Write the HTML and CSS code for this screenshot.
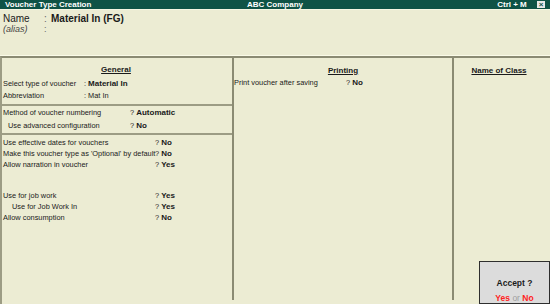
FILE: index.html
```html
<!DOCTYPE html>
<html>

<head>
    <title>Voucher Type Creation</title>
    <link rel="stylesheet" href="styles.css">
</head>

<body>
    <div class="barra">
        <span class="barra-izq">Voucher Type Creation</span>
        <span class="barra-centro">ABC Company</span>
        <span class="barra-der">Ctrl + M <span class="cerrar">&#215;</span></span>
    </div>

    <div class="cabecera">
        <div class="fila-nombre"><span class="etq">Name</span><span class="dos">:</span><b>Material In (FG)</b></div>
        <div class="fila-alias"><span class="etq"><i>(alias)</i></span><span class="dos">:</span></div>
    </div>

    <div class="cuerpo">
        <div class="col col-general">
            <div class="bloque">
                <h5>General</h5>
                <div class="fila"><span class="e1">Select type of voucher</span><span>: <b>Material In</b></span></div>
                <div class="fila"><span class="e1">Abbreviation</span><span>: Mat In</span></div>
            </div>
            <div class="bloque">
                <div class="fila"><span class="e2">Method of voucher numbering</span><span>? <b>Automatic</b></span></div>
                <div class="fila sangria"><span class="e2b">Use advanced configuration</span><span>? <b>No</b></span></div>
            </div>
            <div class="bloque ultimo">
                <div class="fila"><span class="e3">Use effective dates for vouchers</span><span>? <b>No</b></span></div>
                <div class="fila"><span class="e3">Make this voucher type as 'Optional' by default</span><span>? <b>No</b></span></div>
                <div class="fila"><span class="e3">Allow narration in voucher</span><span>? <b>Yes</b></span></div>
                <div class="hueco"></div>
                <div class="fila"><span class="e3">Use for job work</span><span>? <b>Yes</b></span></div>
                <div class="fila sangria2"><span class="e3b">Use for Job Work In</span><span>? <b>Yes</b></span></div>
                <div class="fila"><span class="e3">Allow consumption</span><span>? <b>No</b></span></div>
            </div>
        </div>
        <div class="col col-printing">
            <h5>Printing</h5>
            <div class="fila"><span class="e4">Print voucher after saving</span><span>? <b>No</b></span></div>
        </div>
        <div class="col col-clase">
            <h5>Name of Class</h5>
        </div>
    </div>

    <div class="aceptar">
        <div class="pregunta">Accept ?</div>
        <div class="opciones"><span class="rojo">Yes</span> <span class="gris">or</span> <span class="rojo">No</span></div>
    </div>
</body>

</html>
```

FILE: styles.css
```css
* {
    padding: 0;
    margin: 0;
    box-sizing: border-box;
}

body {
    width: 550px;
    height: 304px;
    background-color: #ececd3;
    font-family: "Liberation Sans", Arial, sans-serif;
    font-size: 7.4px;
    color: #1a1a1a;
    position: relative;
    overflow: hidden;
}

b {
    font-size: 8px;
}

.barra {
    height: 9px;
    background-color: #0f5346;
    color: white;
    font-weight: bold;
    font-size: 8px;
    line-height: 9px;
    display: flex;
    justify-content: space-between;
    padding: 0 5px;
    position: relative;
}

.barra-centro {
    position: absolute;
    left: 247px;
}

.cerrar {
    display: inline-block;
    width: 8px;
    height: 7px;
    margin-left: 8px;
    margin-top: 1px;
    background-color: #e8e8e8;
    color: #0f5346;
    font-size: 8px;
    line-height: 7px;
    text-align: center;
    vertical-align: top;
}

.cabecera {
    height: 47px;
    border-top: 1px solid #f6f6e2;
    padding: 3px 3px 0;
    font-size: 10px;
    border-bottom: 1px solid #fbfbe8;
}

.cabecera b {
    font-size: 10px;
}

.fila-nombre,
.fila-alias {
    display: flex;
    line-height: 11px;
}

.fila-alias {
    font-size: 9px;
    color: #444;
}

.etq {
    width: 41px;
}

.dos {
    width: 7px;
    color: #666;
}

.cuerpo {
    display: grid;
    grid-template-columns: 232px 220px 98px;
    height: 248px;
    border-top: 2px solid #8b8b73;
    border-left: 2px solid #9c9c84;
}

.col {
    border-right: 2px solid #8b8b73;
    height: 242px;
}

.col-clase {
    border-right: none;
}

h5 {
    font-size: 8px;
    text-align: center;
    text-decoration: underline;
    line-height: 11px;
    padding-top: 6px;
    padding-bottom: 3px;
}

.col-general h5 {
    margin-left: -2px;
}

.bloque {
    border-bottom: 2px solid #9c9c84;
    padding-bottom: 3px;
}

.fila {
    display: flex;
    line-height: 11.5px;
    white-space: nowrap;
}

.bloque:nth-child(2) {
    padding-bottom: 1px;
}

.bloque:nth-child(2) .fila {
    line-height: 13px;
}

.bloque.ultimo {
    border-bottom: none;
    padding-top: 2px;
}

.bloque.ultimo .fila {
    line-height: 11px;
}

.e1 {
    width: 82px;
    padding-left: 1px;
}

.e2 {
    width: 128px;
    padding-left: 1px;
}

.sangria .e2b {
    width: 128px;
    padding-left: 6px;
}

.e3 {
    width: 153px;
    padding-left: 1px;
}

.sangria2 .e3b {
    width: 153px;
    padding-left: 10px;
}

.hueco {
    height: 20px;
}

.e4 {
    width: 112px;
}

.col-printing h5 {
    padding-top: 7px;
    padding-bottom: 1px;
}

.col-clase h5 {
    padding-top: 7px;
    margin-left: -8px;
}

.aceptar {
    position: absolute;
    left: 479px;
    top: 261px;
    width: 71px;
    height: 43px;
    background-color: #dcdcdc;
    border: 1px solid #2e2e2e;
    text-align: center;
}

.pregunta {
    font-weight: bold;
    font-size: 8.5px;
    margin-top: 16px;
    line-height: 10px;
}

.opciones {
    margin-top: 5px;
    font-size: 8.5px;
    line-height: 10px;
}

.opciones b,
.rojo {
    color: #ff2222;
    font-weight: bold;
}

.gris {
    color: #a0a0a0;
}
```
